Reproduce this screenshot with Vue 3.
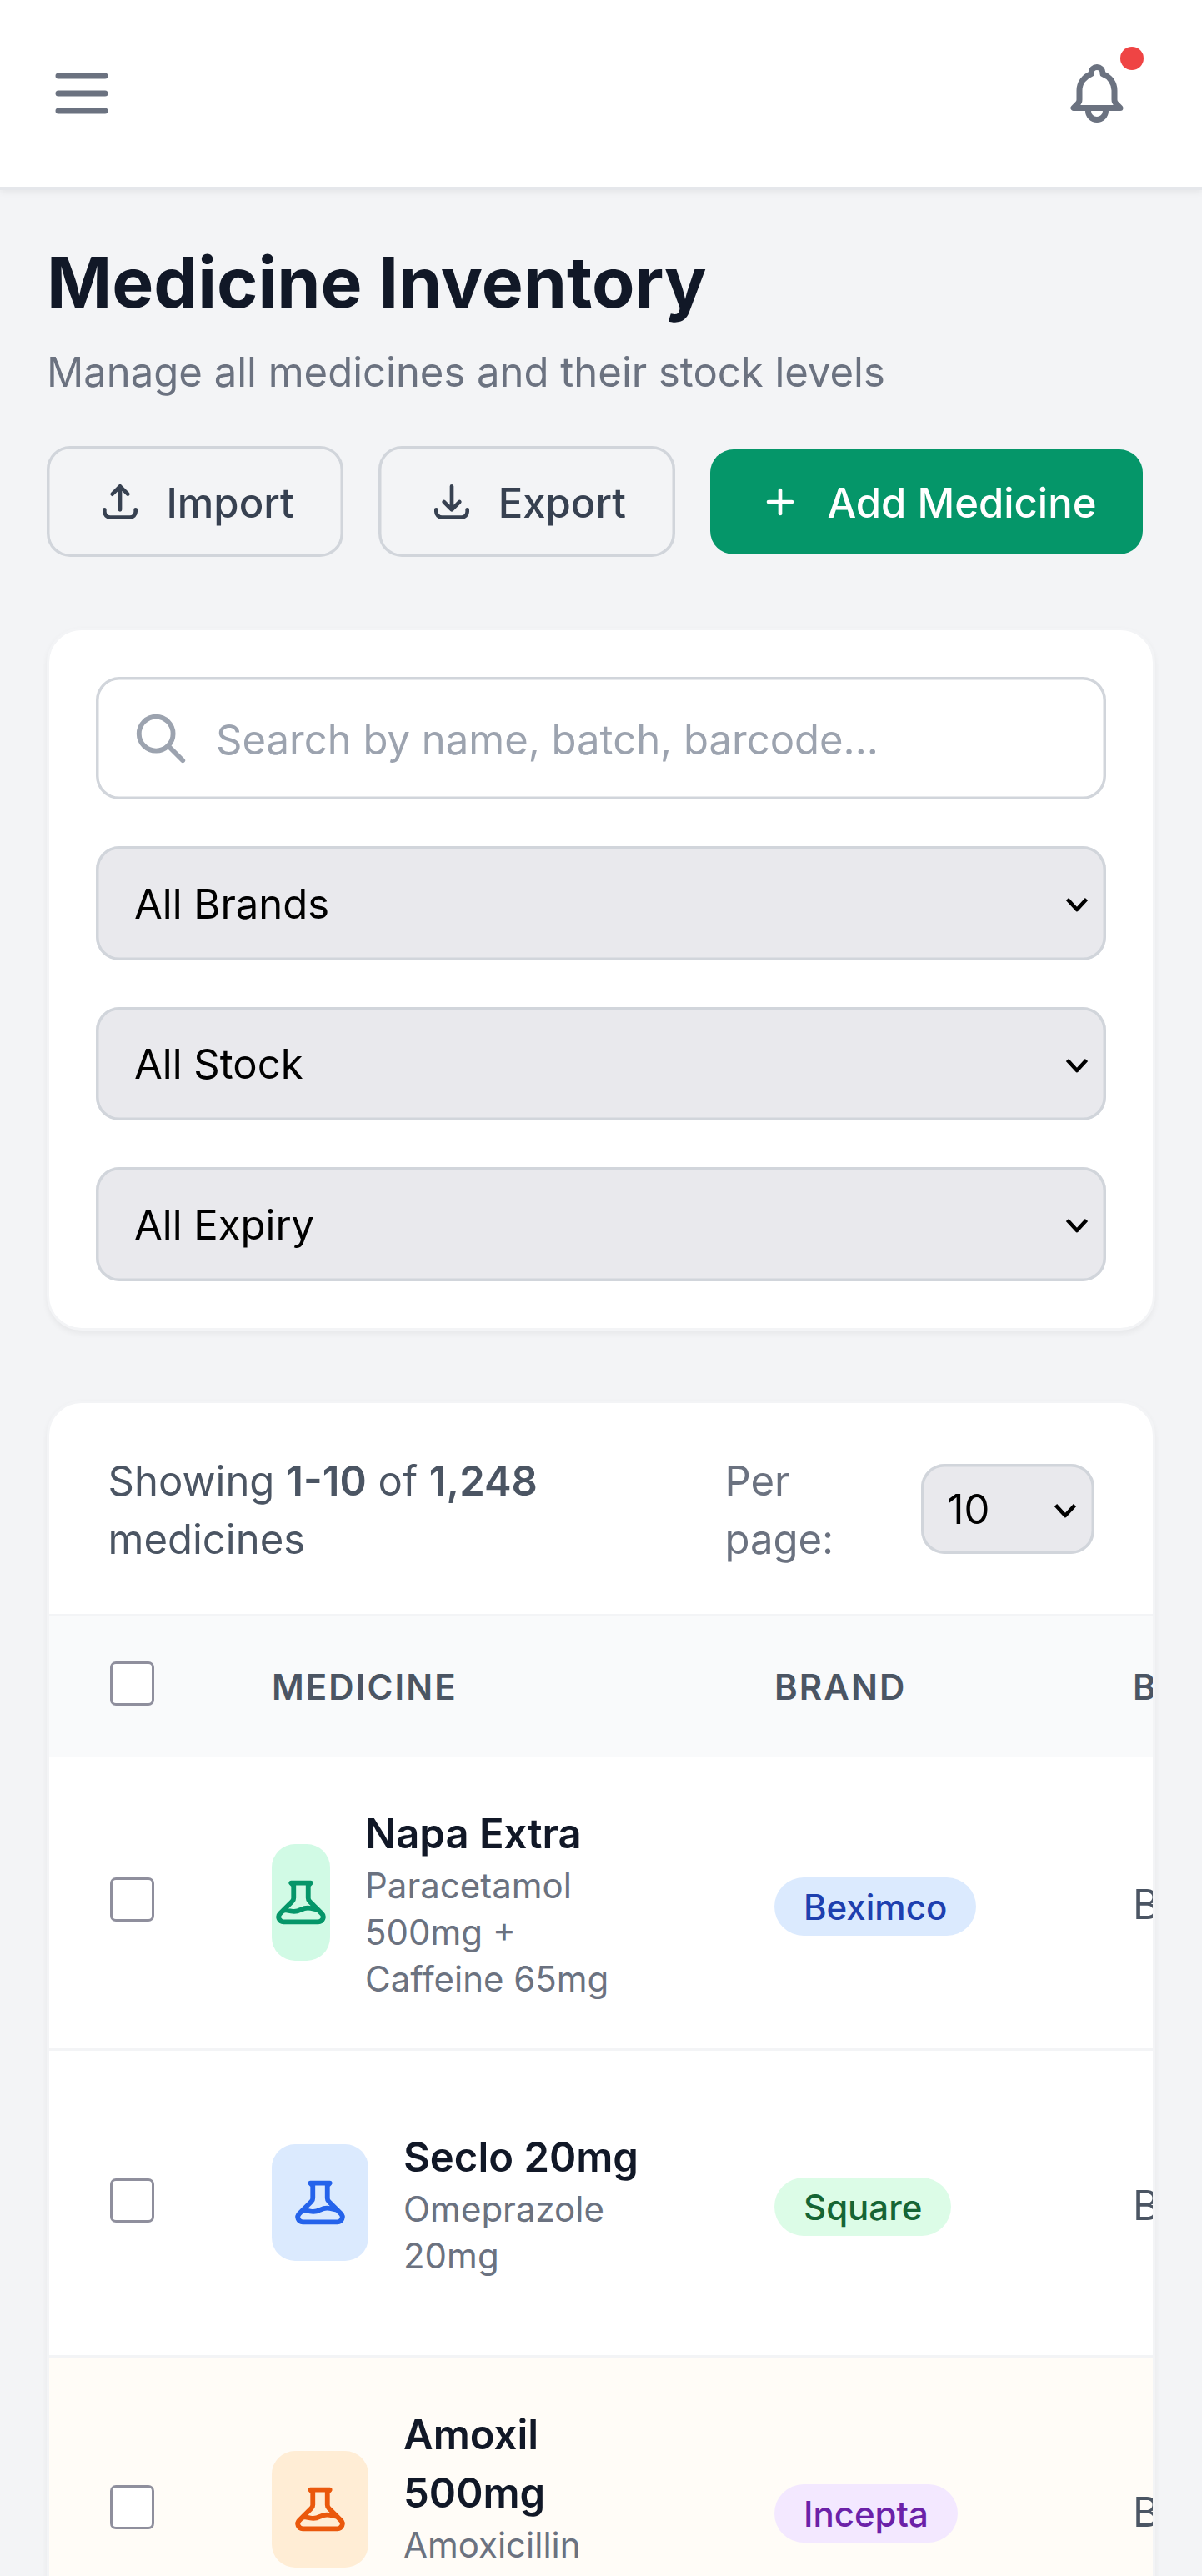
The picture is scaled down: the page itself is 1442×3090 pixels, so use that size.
<template>
  <div class="page">
    <!-- Top bar -->
    <header class="topbar">
      <button class="icon-btn" aria-label="Menu">
        <svg class="icon-lg" viewBox="0 0 24 24">
          <path d="M4 6h16M4 12h16M4 18h16" />
        </svg>
      </button>
      <button class="icon-btn" aria-label="Notifications">
        <svg class="icon-lg" viewBox="0 0 24 24">
          <path d="M15 17h5l-1.405-1.405A2.032 2.032 0 0118 14.158V11a6.002 6.002 0 00-4-5.659V5a2 2 0 10-4 0v.341C7.67 6.165 6 8.388 6 11v3.159c0 .538-.214 1.055-.595 1.436L4 17h5m6 0v1a3 3 0 11-6 0v-1m6 0H9" />
        </svg>
        <span class="dot" />
      </button>
    </header>

    <main class="content">
      <!-- Page heading -->
      <section class="heading">
        <h1>Medicine Inventory</h1>
        <p class="subtitle">Manage all medicines and their stock levels</p>
        <div class="actions">
          <button v-for="a in actions" :key="a.label" class="btn" :class="`btn--${a.kind}`">
            <svg class="icon-sm" viewBox="0 0 24 24"><path :d="a.icon" /></svg>
            <span>{{ a.label }}</span>
          </button>
        </div>
      </section>

      <!-- Filters -->
      <section class="card filters">
        <label class="search">
          <svg class="icon-md" viewBox="0 0 24 24">
            <path d="M21 21l-6-6m2-5a7 7 0 11-14 0 7 7 0 0114 0z" />
          </svg>
          <input v-model="search" type="text" placeholder="Search by name, batch, barcode..." />
        </label>
        <div v-for="f in filters" :key="f" class="select">
          <select><option>{{ f }}</option></select>
          <svg class="chevron" viewBox="0 0 28 18"><path d="M2.500 2.500L14 15L25.500 2.500" /></svg>
        </div>
      </section>

      <!-- Medicines table -->
      <section class="card listing">
        <div class="toolbar">
          <p class="summary">Showing <b>1-10</b> of <b>1,248</b> medicines</p>
          <div class="per-page">
            <span class="per-page__label">Per page:</span>
            <div class="select select--small">
              <select><option>10</option></select>
              <svg class="chevron" viewBox="0 0 28 18"><path d="M2.500 2.500L14 15L25.500 2.500" /></svg>
            </div>
          </div>
        </div>

        <div class="table-wrap">
          <table>
            <colgroup>
              <col class="col-check" />
              <col class="col-medicine" />
              <col class="col-brand" />
              <col class="col-batch" />
            </colgroup>
            <thead>
              <tr>
                <th><input type="checkbox" class="check" /></th>
                <th>Medicine</th>
                <th>Brand</th>
                <th>Batch</th>
              </tr>
            </thead>
            <tbody>
              <tr v-for="m in medicines" :key="m.name" :class="{ low: m.low }">
                <td><input type="checkbox" class="check" /></td>
                <td>
                  <div class="medicine">
                    <div class="flask" :class="[`flask--${m.tone}`, { 'flask--narrow': m.narrow }]">
                      <svg class="icon-md" viewBox="0 0 24 24">
                        <path d="M19.428 15.428a2 2 0 00-1.022-.547l-2.387-.477a6 6 0 00-3.860.517l-.318.158a6 6 0 01-3.860.517L6.050 15.210a2 2 0 00-1.806.547M8 4h8l-1 1v5.172a2 2 0 00.586 1.414l5 5c1.260 1.260.367 3.414-1.415 3.414H4.828c-1.782 0-2.674-2.154-1.414-3.414l5-5A2 2 0 009 10.172V5L8 4z" />
                      </svg>
                    </div>
                    <div class="medicine__text">
                      <p class="medicine__name">{{ m.name }}</p>
                      <p class="medicine__generic">{{ m.generic }}</p>
                    </div>
                  </div>
                </td>
                <td><span class="badge" :class="`badge--${m.brand.toLowerCase()}`">{{ m.brand }}</span></td>
                <td class="batch">{{ m.batch }}</td>
              </tr>
            </tbody>
          </table>
        </div>
      </section>
    </main>
  </div>
</template>

<script setup>
import { ref } from 'vue'

const search = ref('')

const actions = [
  {
    label: 'Import',
    kind: 'outline',
    icon: 'M4 16v1a3 3 0 003 3h10a3 3 0 003-3v-1m-4-8l-4-4m0 0L8 8m4-4v12',
  },
  {
    label: 'Export',
    kind: 'outline',
    icon: 'M4 16v1a3 3 0 003 3h10a3 3 0 003-3v-1m-4-4l-4 4m0 0l-4-4m4 4V4',
  },
  { label: 'Add Medicine', kind: 'primary', icon: 'M12 6v12m-6-6h12' },
]

const filters = ['All Brands', 'All Stock', 'All Expiry']

const medicines = [
  { name: 'Napa Extra', generic: 'Paracetamol 500mg + Caffeine 65mg', brand: 'Beximco', batch: 'B', tone: 'green', narrow: true },
  { name: 'Seclo 20mg', generic: 'Omeprazole 20mg', brand: 'Square', batch: 'B', tone: 'blue' },
  { name: 'Amoxil 500mg', generic: 'Amoxicillin 500mg', brand: 'Incepta', batch: 'B', tone: 'orange', low: true },
]
</script>

<style>
body {
  margin: 0;
  background: #f3f4f6;
}
</style>

<style scoped>
*, *::before, *::after { box-sizing: border-box; }

.page {
  width: 1442px;
  height: 3090px;
  overflow: hidden;
  background: #f3f4f6;
  color: #111827;
  font-family: Inter, sans-serif;
  font-size: 49px;
  line-height: 70px;
}

h1, p { margin: 0; }

button, input, select {
  font: inherit;
  color: inherit;
  margin: 0;
}

svg {
  display: block;
  flex: none;
  fill: none;
  stroke: currentColor;
  stroke-width: 2;
  stroke-linecap: round;
  stroke-linejoin: round;
}

.icon-sm { width: 56px; height: 56px; }
.icon-md { width: 70px; height: 70px; }
.icon-lg { width: 84px; height: 84px; }

/* ── Top bar ── */
.topbar {
  display: flex;
  align-items: center;
  justify-content: space-between;
  height: 228px;
  padding: 0 56px 0 28px;
  background: #fff;
  border-bottom: 4px solid #e5e7eb;
  box-shadow: 0 3.5px 7px rgba(0, 0, 0, 0.05);
}

.icon-btn {
  position: relative;
  padding: 28px;
  border: 0;
  background: none;
  color: #6b7280;
}

.dot {
  position: absolute;
  top: 14px;
  right: 14px;
  width: 28px;
  height: 28px;
  border-radius: 50%;
  background: #ef4444;
}

/* ── Heading ── */
.content { padding: 55px 56px; }

.heading { margin-bottom: 85px; }

h1 {
  font-size: 84px;
  line-height: 112px;
  font-weight: 700;
}

.subtitle {
  padding-top: 17px;
  color: #6b7280;
}

.actions {
  display: flex;
  align-items: center;
  gap: 42px;
  margin-top: 53px;
}

.btn {
  display: flex;
  align-items: center;
  gap: 28px;
  padding: 28px 56px;
  border: 0;
  border-radius: 28px;
  font-weight: 500;
  white-space: nowrap;
}

.btn span { margin: 2px 0 -2px; }

.btn--outline {
  padding: 31.5px 59.5px;
  background: transparent;
  box-shadow: inset 0 0 0 3.5px #d1d5db;
  color: #374151;
}

.btn--primary {
  background: #059669;
  color: #fff;
}

/* ── Cards ── */
.card {
  background: #fff;
  border: 3px solid #f3f4f6;
  border-radius: 42px;
  box-shadow: 0 3.5px 7px rgba(0, 0, 0, 0.05);
}

.filters {
  display: flex;
  flex-direction: column;
  gap: 56px;
  padding: 56px;
  margin-bottom: 84px;
}

.search {
  display: flex;
  align-items: center;
  gap: 31.5px;
  height: 147px;
  padding: 0 42.5px;
  border-radius: 28px;
  box-shadow: inset 0 0 0 3.5px #d1d5db;
  color: #9ca3af;
}

.search input {
  flex: 1;
  padding: 4px 0 0;
  border: 0;
  outline: 0;
  background: none;
  color: #111827;
}

.search input::placeholder {
  color: #9ca3af;
  opacity: 1;
}

.select {
  position: relative;
  height: 136.5px;
}

.select select {
  display: block;
  width: 100%;
  height: 100%;
  padding: 3px 46px 0;
  appearance: none;
  border: 0;
  border-radius: 28px;
  background: #e9e9ed;
  box-shadow: inset 0 0 0 3.5px #d1d5db;
  color: #000;
}

.chevron {
  position: absolute;
  top: calc(50% - 7px);
  right: 21px;
  width: 28px;
  height: 18px;
  color: #000;
  stroke-width: 4.5;
  stroke-linecap: butt;
  pointer-events: none;
}

/* ── Toolbar ── */
.listing { overflow: hidden; }

.toolbar {
  display: flex;
  align-items: center;
  justify-content: space-between;
  padding: 57px 70px 56px 70.5px;
  border-bottom: 3px solid #f3f4f6;
}

.summary {
  width: 600px;
  margin: 2px 0 -2px;
  color: #4b5563;
}

.summary b { font-weight: 600; }

.per-page {
  display: flex;
  align-items: center;
  gap: 28px;
}

.per-page__label {
  width: 207.5px;
  padding-right: 60px;
  margin: 2px 0 -2px;
  color: #6b7280;
}

.select--small {
  width: 208px;
  height: 108px;
}

.select--small select { padding: 3px 31.5px 0; }

/* ── Table ── */
.table-wrap { overflow: hidden; }

table {
  width: 1830px;
  table-layout: fixed;
  border-collapse: separate;
  border-spacing: 0;
}

.col-check { width: 197px; }
.col-medicine { width: 603px; }
.col-brand { width: 430px; }

th, td {
  padding: 0 70px;
  text-align: left;
  vertical-align: middle;
}

th {
  height: 168px;
  background: #f9fafb;
  color: #4b5563;
  font-size: 42px;
  line-height: 56px;
  font-weight: 600;
  letter-spacing: 2.1px;
  text-transform: uppercase;
}

th + th { padding-top: 3px; }

td {
  height: 368px;
  border-top: 3px solid #f3f4f6;
}

tbody tr:first-child td {
  height: 350px;
  border-top: 0;
}

tr.low td { background: #fffcf7; }

.check {
  display: block;
  width: 53px;
  height: 53px;
  margin: 0 0 6px 3px;
  appearance: none;
  border: 3.5px solid #8f8f9d;
  border-radius: 7px;
  background: #fff;
}

.medicine {
  display: flex;
  align-items: center;
  gap: 42px;
}

.flask {
  display: flex;
  flex: none;
  align-items: center;
  justify-content: center;
  width: 116px;
  height: 140px;
  border-radius: 28px;
}

.flask--narrow { width: 70px; }
.flask--green { background: #d1fae5; color: #059669; }
.flask--blue { background: #dbeafe; color: #2563eb; }
.flask--orange { background: #ffedd5; color: #ea580c; }

.medicine__text { margin: 2px 0 -2px; }

.medicine__name { font-weight: 600; }

.medicine__generic {
  margin: -1px 0 1px;
  color: #6b7280;
  font-size: 42px;
  line-height: 56px;
}

.badge {
  display: inline-block;
  padding: 8px 35px 6px;
  margin-top: 10px;
  border-radius: 35px;
  font-size: 42px;
  line-height: 56px;
  font-weight: 500;
  vertical-align: middle;
}

.badge--beximco { background: #dbeafe; color: #1e40af; }
.badge--square { background: #dcfce7; color: #166534; }
.badge--incepta { background: #f3e8ff; color: #6b21a8; }

td.batch {
  padding-top: 7px;
  color: #4b5563;
}
</style>
